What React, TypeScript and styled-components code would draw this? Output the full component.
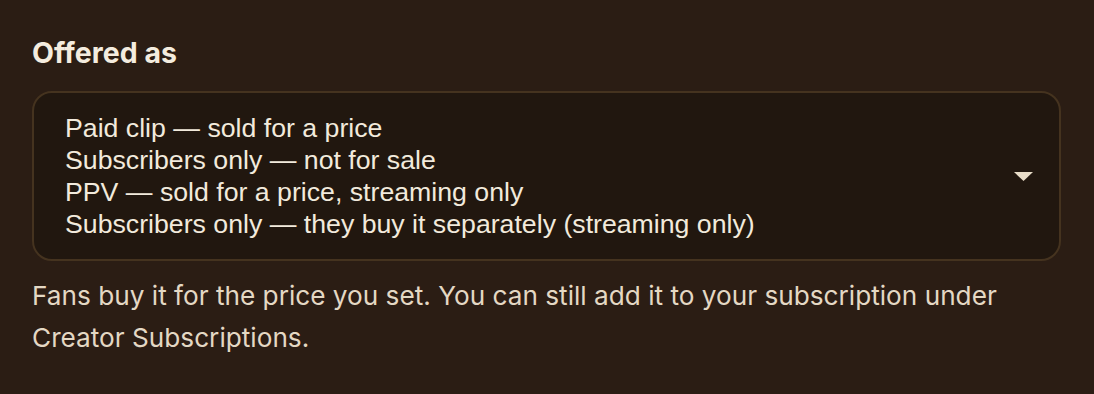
import styled, { createGlobalStyle } from "styled-components";

const GlobalStyle = createGlobalStyle`
  html, body {
    margin: 0;
    padding: 0;
    background: #2b1d14;
  }
`;

const Section = styled.section`
  padding: 35px 32px 0 32px;
  font-family: Inter, "Noto Sans", sans-serif;
`;

const Label = styled.div`
  font-size: 28.5px;
  line-height: 36px;
  font-weight: 700;
  color: #f4ecdf;
  margin-bottom: 20px;
`;

const SelectBox = styled.div`
  box-sizing: border-box;
  height: 170px;
  width: 1029px;
  border: 2px solid #45331f;
  border-radius: 20px;
  background: #21170f;
  display: flex;
  align-items: center;
  justify-content: space-between;
  padding: 0 26px 0 31px;
`;

const OptionList = styled.div`
  display: flex;
  flex-direction: column;
`;

const Option = styled.div`
  font-family: "Liberation Sans", Arial, sans-serif;
  font-size: 26.7px;
  line-height: 32px;
  color: #f2eadc;
  white-space: nowrap;
`;

const Caret = styled.svg`
  width: 19px;
  height: 9px;
  flex-shrink: 0;
`;

const Help = styled.p`
  margin: 14px 0 0 0;
  font-size: 26.2px;
  line-height: 41.6px;
  color: #e4d8c4;
  max-width: 1030px;
`;

const options = [
  "Paid clip — sold for a price",
  "Subscribers only — not for sale",
  "PPV — sold for a price, streaming only",
  "Subscribers only — they buy it separately (streaming only)",
];

export default function App() {
  return (
    <>
      <GlobalStyle />
      <Section>
        <Label>Offered as</Label>
        <SelectBox>
          <OptionList>
            {options.map((o) => (
              <Option key={o}>{o}</Option>
            ))}
          </OptionList>
          <Caret viewBox="0 0 19 9">
            <path d="M0 0 H19 L9.5 9 Z" fill="#e8dcc8" />
          </Caret>
        </SelectBox>
        <Help>
          Fans buy it for the price you set. You can still add it to your subscription under
          Creator Subscriptions.
        </Help>
      </Section>
    </>
  );
}
